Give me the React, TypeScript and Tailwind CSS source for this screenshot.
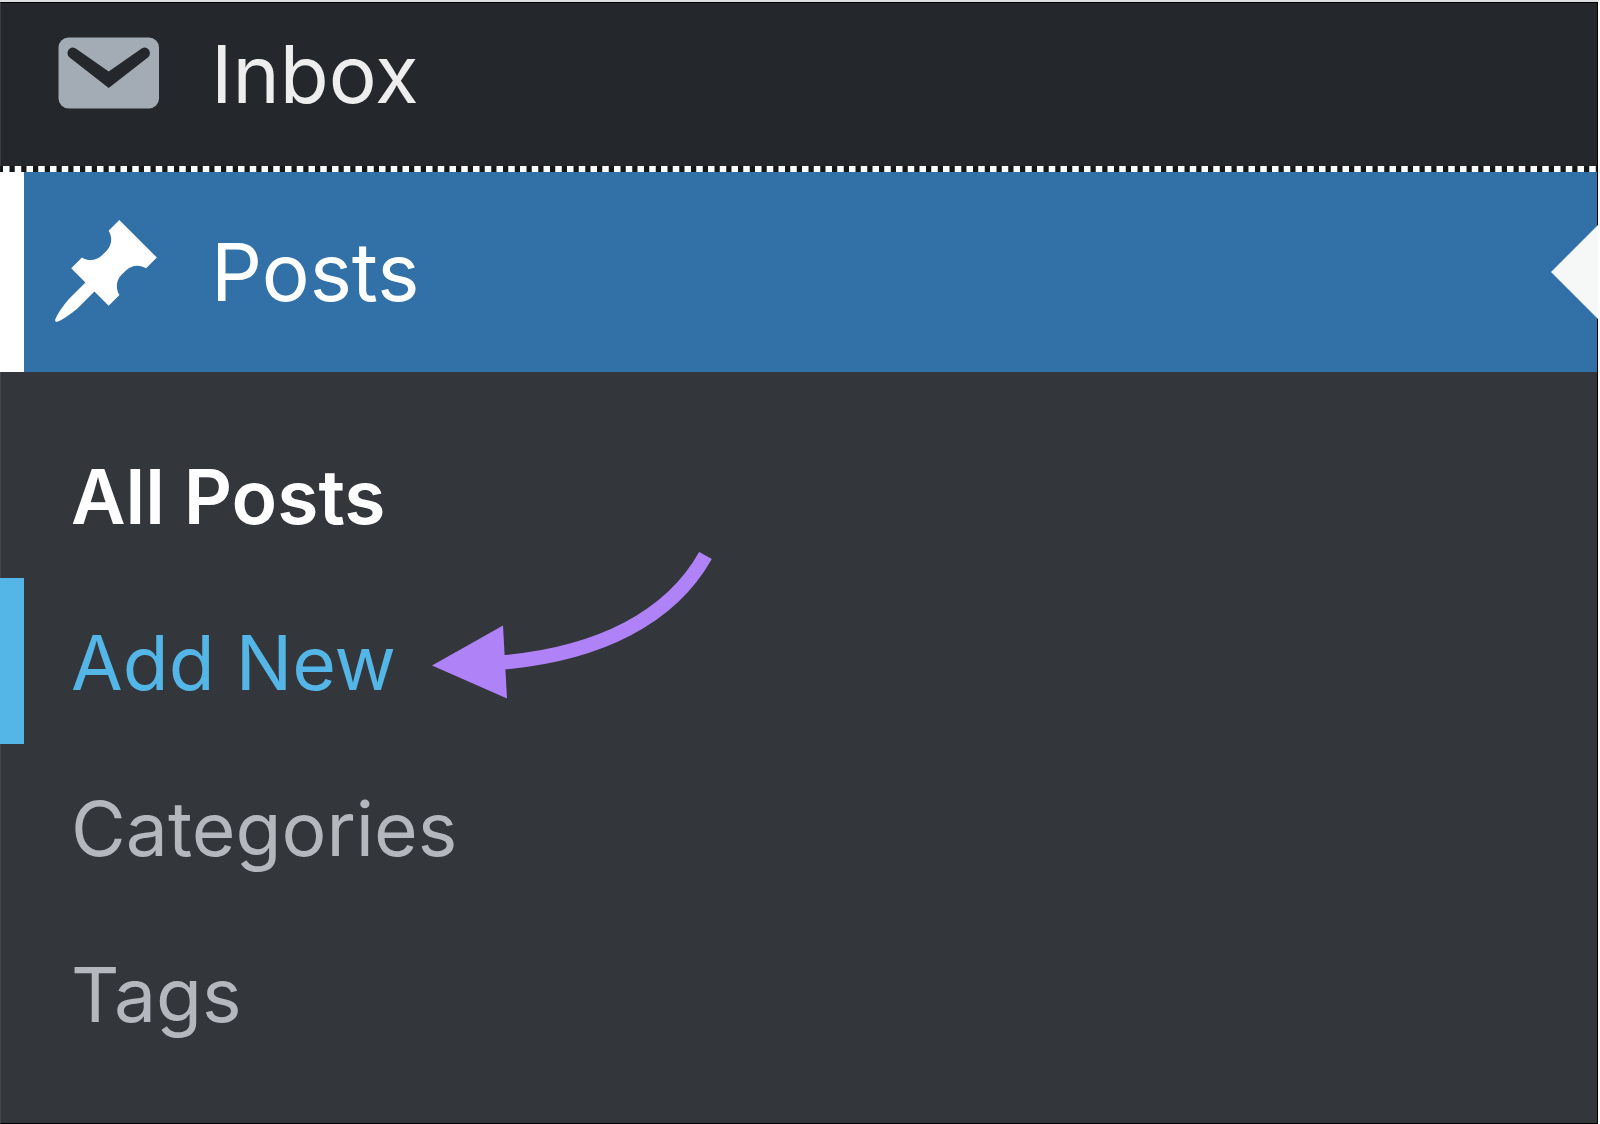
import { clsx } from 'clsx';

const SUBMENU = [
  { href: '#all-posts', label: 'All Posts', state: 'current' },
  { href: '#add-new', label: 'Add New', state: 'hover' },
  { href: '#categories', label: 'Categories', state: 'idle' },
  { href: '#tags', label: 'Tags', state: 'idle' },
];

export default function App() {
  return (
    <div className="flex min-h-screen flex-col overflow-hidden border-t-2 border-r-2 border-t-[#dcdfe1] border-r-white bg-[#33363b] font-['Inter',sans-serif]">
      <nav className="flex-1 border border-black border-l-[#43464a]">
        <ul className="-ml-px">
          <li>
            <a
              href="#inbox"
              className="flex items-center gap-[46px] border-l border-l-[#3a3d41] bg-[#24272c] pt-[11px] pb-[34px] pl-[46px] text-[80px] leading-[115px] text-[#eeeeee]"
            >
              <InboxIcon />
              <span>Inbox</span>
            </a>
          </li>

          <li>
            <DottedOutline />
            <a
              href="#posts"
              className="relative flex items-center gap-[46px] border-l-24 border-l-white bg-[#3171a7] py-10 pl-[23px] text-[80px] leading-[120px] text-white"
            >
              <PinIcon />
              <span>Posts</span>
              <CurrentArrow />
            </a>

            {/* Submenu */}
            <ul className="pt-10">
              {SUBMENU.map((item) => (
                <li key={item.href} className="relative">
                  <a
                    href={item.href}
                    className={clsx(
                      'block border-l-24 pt-10 pb-9 pl-[47px] text-[75px] leading-[90px]',
                      item.state === 'current' && 'border-l-transparent font-semibold text-white',
                      item.state === 'hover' && 'border-l-[#54b5e7] text-[#54b5e7]',
                      item.state === 'idle' && 'border-l-transparent text-[#b4b8be]'
                    )}
                  >
                    {item.label}
                  </a>
                  {item.state === 'hover' && <PointerArrow />}
                </li>
              ))}
            </ul>
          </li>
        </ul>
      </nav>
    </div>
  );
}

function InboxIcon() {
  return (
    <svg width="118" height="118" viewBox="0 0 118 118" fill="none" aria-hidden="true" className="shrink-0">
      <rect x="11.5" y="23.5" width="100.5" height="71" rx="10" fill="#a3abb4" />
      <path
        d="M28.4 34.2L61.7 57.5l33.3-23.3c5.5-3 10.5 4 6.5 8.8L61.7 74 22 43c-4-4.8.9-11.8 6.4-8.8z"
        fill="#24272c"
      />
    </svg>
  );
}

function PinIcon() {
  return (
    <svg width="118" height="118" viewBox="0 0 20 20" fill="currentColor" aria-hidden="true" className="shrink-0">
      <path d="M10.44 3.02l1.82-1.82 6.36 6.35-1.83 1.82c-1.05-.68-2.48-.57-3.41.36l-.75.75c-.92.93-1.04 2.35-.35 3.41l-1.83 1.82-2.41-2.41-2.8 2.79c-.42.42-3.38 2.71-3.8 2.29s1.86-3.39 2.28-3.81l2.79-2.79L4.1 9.36l1.83-1.82c1.05.69 2.48.57 3.4-.36l.75-.75c.93-.92 1.05-2.35.36-3.41z" />
    </svg>
  );
}

function DottedOutline() {
  return (
    <svg width="100%" height="6" aria-hidden="true" className="block bg-[#15181b]">
      <line x1="3" y1="3" x2="100%" y2="3" stroke="#fff" strokeWidth="6" strokeDasharray="6.5 5.25" />
    </svg>
  );
}

function CurrentArrow() {
  return (
    <svg width="47" height="94" viewBox="0 0 47 94" aria-hidden="true" className="absolute top-1/2 -right-px -translate-y-1/2">
      <path d="M47 0v94L0 47z" fill="#f6f7f7" />
    </svg>
  );
}

function PointerArrow() {
  return (
    <svg width="280" height="148" viewBox="0 0 280 148" fill="none" aria-hidden="true" className="absolute -top-[26px] left-[432px]">
      <path d="M0 113.5L71 73.5l4 73z" fill="#af82f8" />
      <path d="M70 110.5C168 102 239 65 273.5 3.5" stroke="#af82f8" strokeWidth="14.5" />
    </svg>
  );
}
